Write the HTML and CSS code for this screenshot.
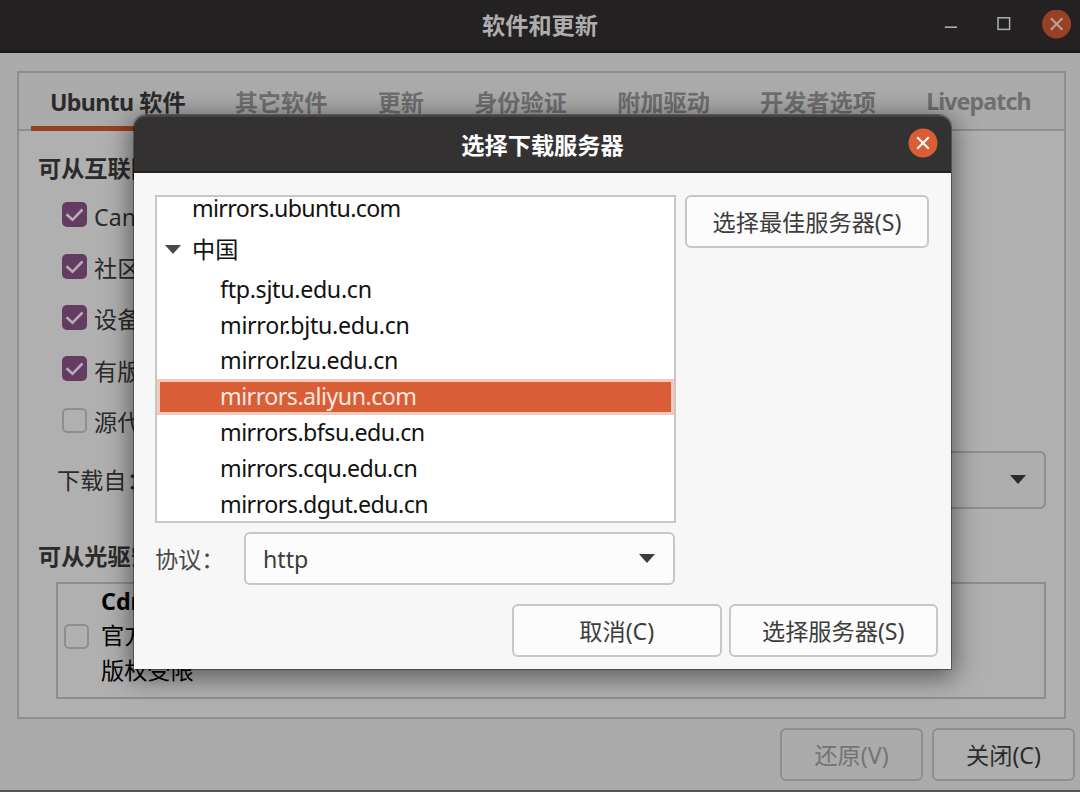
FILE: index.html
```html
<!DOCTYPE html>
<html lang="zh-CN">
<head>
    <meta charset="UTF-8">
    <meta name="viewport" content="width=device-width, initial-scale=1.0">
    <title>软件和更新</title>
    <link rel="stylesheet" href="styles.css">
</head>
<body>
    <div class="window">
        <!-- Title bar -->
        <header class="titlebar">
            <h1 class="title">软件和更新</h1>
            <div class="window-controls">
                <svg class="control" viewBox="0 0 30 30"><path d="M8.8 17.2h12.2" stroke="#adadad" stroke-width="1.6"/></svg>
                <svg class="control" viewBox="0 0 30 30"><rect x="9" y="7.8" width="11.6" height="11.6" fill="none" stroke="#adadad" stroke-width="1.5"/></svg>
                <svg class="control" viewBox="0 0 30 30"><circle cx="14.6" cy="14" r="14.5" fill="#974024"/><path d="M8.8 8.2l11.6 11.6M20.4 8.2L8.8 19.8" stroke="#b9a49c" stroke-width="2"/></svg>
            </div>
        </header>

        <!-- Notebook -->
        <main class="notebook">
            <nav class="tabs">
                <div class="tab tab-ubuntu active"><span class="latin">Ubuntu</span> 软件</div>
                <div class="tab">其它软件</div>
                <div class="tab">更新</div>
                <div class="tab">身份验证</div>
                <div class="tab">附加驱动</div>
                <div class="tab">开发者选项</div>
                <div class="tab tab-livepatch">Livepatch</div>
            </nav>
            <section class="page">
                <h2 class="heading">可从互联网下载</h2>
                <div class="options">
                    <div class="option"><span class="check checked"><svg viewBox="0 0 25 25"><path d="M4.5 12.2l6 5.6L20.5 7.5"/></svg></span>Canonical</div>
                    <div class="option"><span class="check checked"><svg viewBox="0 0 25 25"><path d="M4.5 12.2l6 5.6L20.5 7.5"/></svg></span>社区维护</div>
                    <div class="option"><span class="check checked"><svg viewBox="0 0 25 25"><path d="M4.5 12.2l6 5.6L20.5 7.5"/></svg></span>设备驱动</div>
                    <div class="option"><span class="check checked"><svg viewBox="0 0 25 25"><path d="M4.5 12.2l6 5.6L20.5 7.5"/></svg></span>有版权</div>
                    <div class="option"><span class="check"></span>源代码</div>
                </div>
                <div class="source">
                    <span>下载自：</span>
                    <div class="combo combo-source"><svg class="arrow" viewBox="0 0 16 9"><path d="M0 0h16L8 9z"/></svg></div>
                </div>
                <h2 class="heading heading-cd">可从光驱安装</h2>
                <div class="cd-list">
                    <span class="check"></span>
                    <div class="cd-text">
                        <b>Cdrom</b>
                        <span>官方支持</span>
                        <span>版权受限</span>
                    </div>
                </div>
            </section>
        </main>

        <footer class="actions">
            <button class="button dim" disabled>还原(V)</button>
            <button class="button">关闭(C)</button>
        </footer>
    </div>

    <!-- Server dialog -->
    <div class="dialog">
        <header class="dialog-header">
            <h2 class="dialog-title">选择下载服务器</h2>
            <svg class="dialog-close" viewBox="0 0 30 30"><circle cx="15" cy="15" r="14.5" fill="#da5e35"/><path d="M9.2 9.2l11.6 11.6M20.8 9.2L9.2 20.8" stroke="#fff" stroke-width="2"/></svg>
        </header>
        <div class="dialog-body">
            <div class="columns">
                <div class="server-list">
                    <div class="row top">mirrors.ubuntu.com</div>
                    <div class="row country"><svg class="arrow" viewBox="0 0 16 9"><path d="M0 0h16L8 9z"/></svg>中国</div>
                    <div class="row">ftp.sjtu.edu.cn</div>
                    <div class="row">mirror.bjtu.edu.cn</div>
                    <div class="row">mirror.lzu.edu.cn</div>
                    <div class="row tight selected">mirrors.aliyun.com</div>
                    <div class="row tight">mirrors.bfsu.edu.cn</div>
                    <div class="row tight">mirrors.cqu.edu.cn</div>
                    <div class="row tight">mirrors.dgut.edu.cn</div>
                </div>
                <button class="button best">选择最佳服务器(S)</button>
            </div>
            <div class="protocol">
                <span class="protocol-label">协议：</span>
                <div class="combo">http<svg class="arrow" viewBox="0 0 16 9"><path d="M0 0h16L8 9z"/></svg></div>
            </div>
            <div class="dialog-actions">
                <button class="button">取消(C)</button>
                <button class="button">选择服务器(S)</button>
            </div>
        </div>
    </div>
</body>
</html>
```
FILE: styles.css
```css
* {
    box-sizing: border-box;
}

body {
    margin: 0;
    width: 1080px;
    height: 792px;
    overflow: hidden;
    background: #ababab;
    color: #2b2b2b;
    font-family: "Noto Sans", "Noto Sans CJK SC", sans-serif;
    font-size: 23.2px;
    line-height: 34px;
    white-space: nowrap;
}

h1, h2 {
    margin: 0;
    font-size: 23.2px;
}

svg {
    display: block;
    fill: none;
}

.window {
    width: 1080px;
    height: 792px;
    display: flex;
    flex-direction: column;
    border-bottom: 2px solid #555;
}

/* Title bar */
.titlebar {
    height: 53px;
    flex: none;
    display: grid;
    grid-template-columns: 1fr auto 1fr;
    align-items: center;
    background: #242122;
    border-bottom: 2px solid #1b181a;
    color: #adadad;
}

.title {
    grid-column: 2;
    padding-bottom: 4px;
    font-family: "Noto Sans CJK SC", sans-serif;
    font-weight: 700;
}

.window-controls {
    display: flex;
    justify-content: flex-end;
    gap: 23px;
    padding: 0 8px 2px 0;
}

.control {
    width: 30px;
    height: 30px;
}

/* Notebook */
.notebook {
    margin: 18px 14px 0 17px;
    height: 648px;
    flex: none;
    display: flex;
    flex-direction: column;
    border: 2px solid #8e8e8e;
    background: #b0b0b0;
}

.tabs {
    height: 58px;
    flex: none;
    display: flex;
    gap: 12.2px;
    padding-left: 12px;
    background: #ababab;
    border-bottom: 2px solid #8e8e8e;
}

.tab {
    height: 58px;
    padding: 12px 19px 0;
    color: #6f6f6f;
    font-weight: 700;
}

.tab.active {
    color: #2b2b2b;
    border-bottom: 5px solid #974024;
}

.tab-ubuntu {
    width: 172.5px;
}

.latin {
    letter-spacing: -0.7px;
}

.tab-livepatch {
    padding-top: 11px;
    letter-spacing: -0.9px;
}

.page {
    padding: 20px 18px 0 19px;
}

.heading {
    height: 34px;
    font-weight: 700;
}

.options {
    padding-top: 6px;
}

.option {
    height: 51.4px;
    display: flex;
    align-items: center;
    gap: 7px;
    margin-left: 24px;
}

.check {
    width: 25px;
    height: 25px;
    flex: none;
    border: 2px solid #8e8e8e;
    border-radius: 5px;
    margin-bottom: 4px;
}

.check.checked {
    border: none;
    background: #643c61;
}

.check path {
    stroke: #b5adb5;
    stroke-width: 2.6;
}

.source {
    display: flex;
    align-items: center;
    justify-content: space-between;
    margin-left: 19px;
    margin-top: 3px;
}

.combo {
    flex: 1;
    height: 53px;
    display: flex;
    align-items: center;
    justify-content: space-between;
    padding: 0 18px 0 17px;
    background: #fcfcfc;
    border: 2px solid #c9c7c5;
    border-radius: 6px;
    color: #3d3d3d;
}

.combo-source {
    height: 58px;
    justify-content: flex-end;
    background: #aeaeae;
    border-color: #8e8e8e;
    color: #2b2b2b;
}

.arrow {
    width: 16px;
    height: 9px;
    fill: currentColor;
}

.heading-cd {
    margin-top: 30px;
}

.cd-list {
    height: 117px;
    margin: 9px 0 0 18px;
    display: flex;
    padding-left: 6px;
    border: 2px solid #8e8e8e;
    color: #000;
}

.cd-list .check {
    margin-top: 40px;
}

.cd-text {
    display: flex;
    flex-direction: column;
    margin-left: 12px;
    line-height: 34.4px;
}

/* Buttons */
.button {
    height: 53px;
    padding: 0;
    border: 2px solid #c9c7c5;
    border-radius: 6px;
    background: #fcfcfc;
    color: #3d3d3d;
    font: inherit;
}

.actions {
    display: flex;
    justify-content: flex-end;
    gap: 9px;
    padding: 9px 5px 0 0;
}

.actions .button {
    width: 143px;
    background: #aeaeae;
    border-color: #8e8e8e;
    color: #2b2b2b;
}

.actions .dim {
    background: #ababab;
    color: #747474;
}

/* Dialog floats above the window */
.dialog {
    position: absolute;
    left: 134px;
    top: 115px;
    width: 817px;
    height: 554px;
    border-radius: 12px 12px 0 0;
    background: #f7f7f7;
    box-shadow: 0 0 0 1px rgba(0, 0, 0, 0.35), 0 5px 26px 3px rgba(0, 0, 0, 0.5);
}

.dialog-header {
    height: 58px;
    display: grid;
    grid-template-columns: 1fr auto 1fr;
    align-items: center;
    background: #333132;
    border-top: 2px solid #464445;
    border-bottom: 2px solid #222021;
    border-radius: 12px 12px 0 0;
    color: #fff;
}

.dialog-title {
    grid-column: 2;
    font-family: "Noto Sans CJK SC", sans-serif;
    font-weight: 700;
}

.dialog-close {
    width: 30px;
    height: 30px;
    justify-self: end;
    margin-right: 13px;
    margin-bottom: 2px;
}

.dialog-body {
    padding: 22px 13px 0 21px;
}

.columns {
    display: flex;
    align-items: flex-start;
    gap: 9px;
}

.server-list {
    width: 521px;
    height: 328px;
    overflow: hidden;
    background: #fff;
    border: 2px solid #c9c7c5;
    color: #111;
}

.row {
    height: 35.8px;
    padding-left: 63px;
    line-height: 34px;
    letter-spacing: -0.3px;
}

.row.tight {
    letter-spacing: -0.52px;
}

.row.top {
    margin-top: -6px;
    padding-left: 35px;
    letter-spacing: -0.65px;
}

.row.country {
    height: 45px;
    display: flex;
    align-items: center;
    gap: 11px;
    padding-left: 8px;
    letter-spacing: 0;
}

.row.country .arrow {
    color: #4a4a4a;
}

.row.selected {
    padding-left: 60px;
    border: 3px solid #f2cbbd;
    background: #da5e35;
    color: #fbe9e2;
    line-height: 29px;
}

.best {
    width: 244px;
}

.protocol {
    display: flex;
    align-items: center;
    width: 520px;
    margin-top: 9px;
    color: #4a4a4a;
}

.protocol-label {
    width: 89px;
}

.dialog-actions {
    display: flex;
    justify-content: flex-end;
    gap: 7px;
    margin-top: 19px;
}

.dialog-actions .button {
    width: 209.5px;
}
```
